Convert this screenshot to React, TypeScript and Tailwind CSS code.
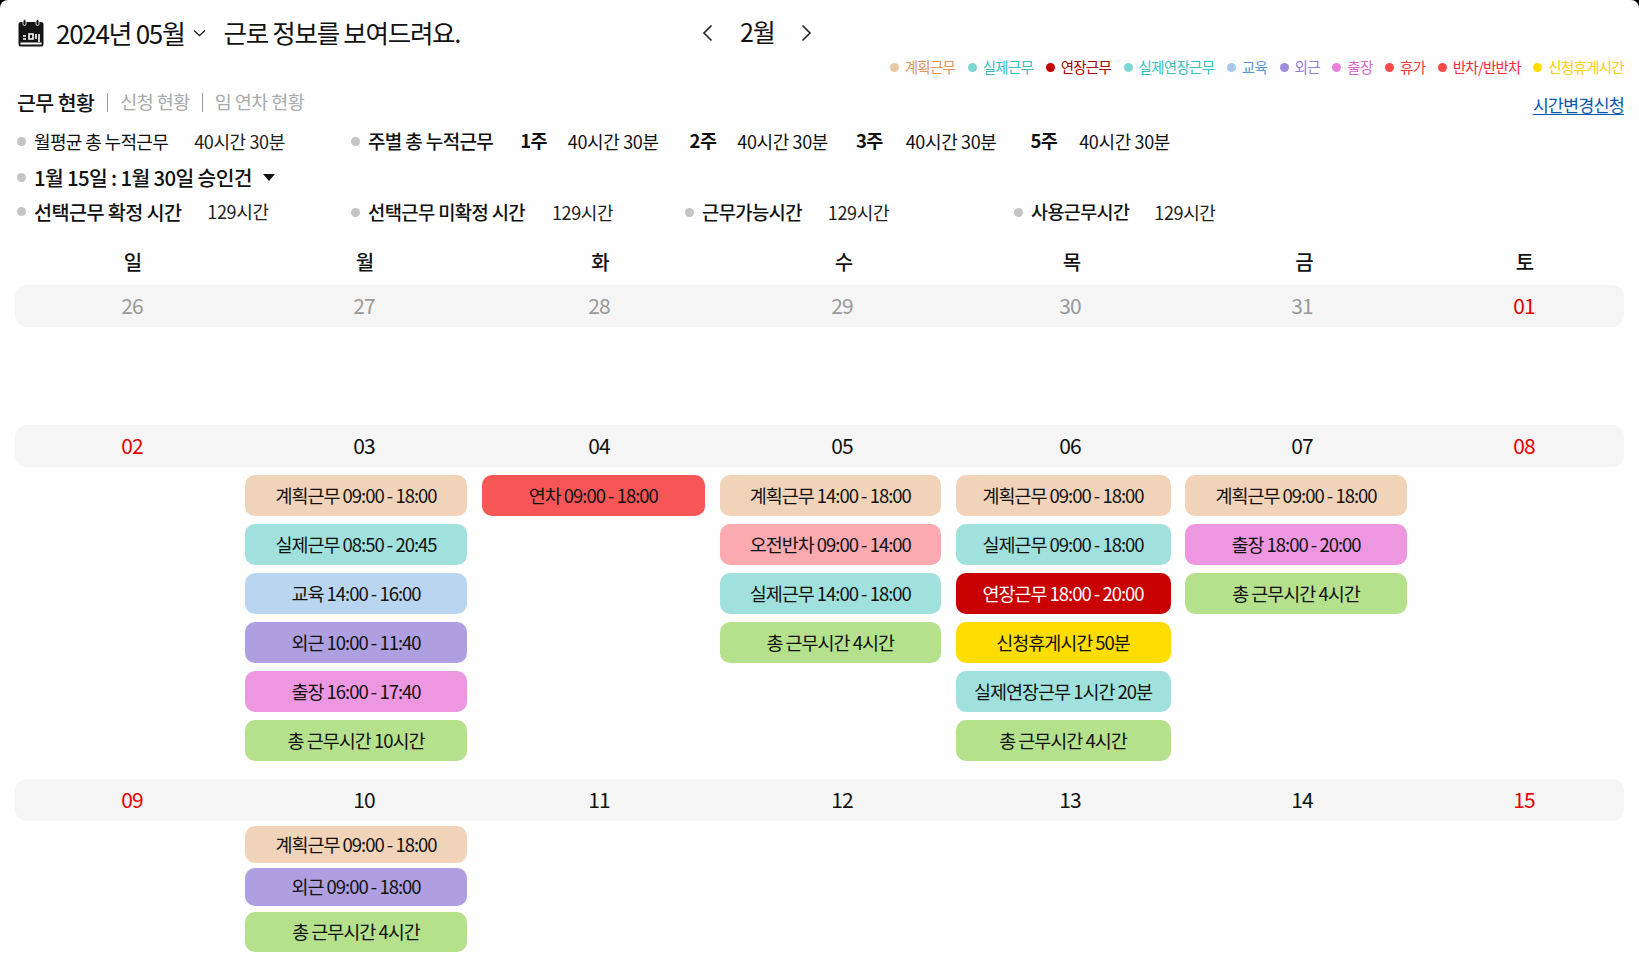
import React from "react";

const font = { fontFamily: '"Noto Sans CJK KR", "Noto Sans", sans-serif' };

const legend = [
  { label: "계획근무", dot: "bg-[#e9c8a8]", text: "text-[#e0955a]" },
  { label: "실제근무", dot: "bg-[#7cd6d4]", text: "text-[#35bfc0]" },
  { label: "연장근무", dot: "bg-[#c80000]", text: "text-[#a80000]" },
  { label: "실제연장근무", dot: "bg-[#7cd6d4]", text: "text-[#35bfc0]" },
  { label: "교육", dot: "bg-[#a9c9ea]", text: "text-[#5b94d6]" },
  { label: "외근", dot: "bg-[#9b8cdc]", text: "text-[#8f7fe0]" },
  { label: "출장", dot: "bg-[#ea80dc]", text: "text-[#d768c8]" },
  { label: "휴가", dot: "bg-[#f84a4a]", text: "text-[#f83a3a]" },
  { label: "반차/반반차", dot: "bg-[#f84a4a]", text: "text-[#fa2a3a]" },
  { label: "신청휴게시간", dot: "bg-[#ffdd00]", text: "text-[#ffcc00]" },
];

const plan = "bg-[#f0d3b8] text-[#111]";
const actual = "bg-[#a0e1de] text-[#111]";
const edu = "bg-[#b9d5f0] text-[#111]";
const out = "bg-[#ad9fe0] text-[#111]";
const trip = "bg-[#ec97e0] text-[#111]";
const total = "bg-[#b5e18d] text-[#111]";

type Chip = { text: string; color: string; size?: string };

const weeks: { dates: string[]; cols: Chip[][] }[] = [
  { dates: ["26", "27", "28", "29", "30", "31", "01"], cols: [] },
  {
    dates: ["02", "03", "04", "05", "06", "07", "08"],
    cols: [
      [],
      [
        { text: "계획근무 09:00 - 18:00", color: plan },
        { text: "실제근무 08:50 - 20:45", color: actual },
        { text: "교육 14:00 - 16:00", color: edu },
        { text: "외근 10:00 - 11:40", color: out },
        { text: "출장 16:00 - 17:40", color: trip },
        { text: "총 근무시간 10시간", color: total },
      ],
      [{ text: "연차 09:00 - 18:00", color: "bg-[#f65656] text-[#111]" }],
      [
        { text: "계획근무 14:00 - 18:00", color: plan },
        { text: "오전반차 09:00 - 14:00", color: "bg-[#fbaab0] text-[#111]" },
        { text: "실제근무 14:00 - 18:00", color: actual },
        { text: "총 근무시간 4시간", color: total },
      ],
      [
        { text: "계획근무 09:00 - 18:00", color: plan },
        { text: "실제근무 09:00 - 18:00", color: actual },
        { text: "연장근무 18:00 - 20:00", color: "bg-[#c80000] text-white" },
        { text: "신청휴게시간 50분", color: "bg-[#ffdd00] text-[#111]" },
        { text: "실제연장근무 1시간 20분", color: actual },
        { text: "총 근무시간 4시간", color: total },
      ],
      [
        { text: "계획근무 09:00 - 18:00", color: plan },
        { text: "출장 18:00 - 20:00", color: trip },
        { text: "총 근무시간 4시간", color: total },
      ],
    ],
  },
  {
    dates: ["09", "10", "11", "12", "13", "14", "15"],
    cols: [
      [],
      [
        { text: "계획근무 09:00 - 18:00", color: plan, size: "h-[37px]" },
        { text: "외근 09:00 - 18:00", color: out, size: "h-[38px]" },
        { text: "총 근무시간 4시간", color: total, size: "h-[40px] mt-px" },
      ],
    ],
  },
];

function Dot() {
  return <span className="mr-2 h-[9px] w-[9px] shrink-0 rounded-full bg-[#c4c4c4]" />;
}

function Band({ dates, muted }: { dates: string[]; muted?: boolean }) {
  return (
    <div className="grid h-[42px] grid-cols-[234px_230px_240px_246px_210px_254px_190px] items-center rounded-[12px] bg-[#f5f5f5] text-[21px] tracking-[-0.04em]">
      {dates.map((d, i) => {
        const red = i === 0 || i === 6;
        let color = "text-[#111]";
        if (muted) color = "text-[#999]";
        if (red && !(muted && i === 0)) color = "text-[#e60000]";
        return (
          <div key={d} className={`text-center ${color}`}>
            {d}
          </div>
        );
      })}
    </div>
  );
}

function Stat({ label, value, gap, labelClass }: { label: string; value: string; gap: string; labelClass: string }) {
  return (
    <div className="flex items-center">
      <Dot />
      <span className={labelClass}>{label}</span>
      <span className={`${gap} text-[18px] tracking-[-0.02em] text-[#222]`}>{value}</span>
    </div>
  );
}

function CalendarIcon() {
  return (
    <svg width="26" height="28" viewBox="0 0 26 28" className="shrink-0">
      <rect x="0.5" y="3" width="25" height="24.5" rx="2.5" fill="#151515" />
      <rect x="5" y="0.5" width="3" height="6" rx="1.5" fill="#151515" stroke="#fff" strokeWidth="0.8" />
      <rect x="18" y="0.5" width="3" height="6" rx="1.5" fill="#151515" stroke="#fff" strokeWidth="0.8" />
      <rect x="2.5" y="23.5" width="21" height="2" fill="#fff" />
      <path d="M5 17h3M5 20h3M11 15h4v5h-4zM18 15v5M21 15v8" stroke="#fff" strokeWidth="1.6" fill="none" />
    </svg>
  );
}

export default function App() {
  return (
    <div className="min-h-screen bg-black" style={font}>
      <div className="h-[960px] overflow-hidden rounded-t-[8px] bg-[#fefefe] px-[15px] pt-[16px] text-[#111]">
        {/* title */}
        <div className="flex h-8 items-center">
          <span className="ml-[3px] mt-[2px]">
            <CalendarIcon />
          </span>
          <span className="ml-[12px] text-[26px] tracking-[-0.05em]">2024년 05월</span>
          <svg width="13" height="8" viewBox="0 0 13 8" className="ml-[8px] mt-[2px]">
            <path d="M1 1.5l5.5 5 5.5-5" stroke="#222" strokeWidth="1.3" fill="none" />
          </svg>
          <span className="ml-[18px] text-[25.5px] tracking-[-0.05em]">근로 정보를 보여드려요.</span>
          <svg width="11" height="18" viewBox="0 0 11 18" className="ml-[242px] mt-[2px]">
            <path d="M9.5 1.5L2 9l7.5 7.5" stroke="#222" strokeWidth="1.6" fill="none" />
          </svg>
          <span className="ml-[27px] text-[25px] tracking-[-0.05em]">2월</span>
          <svg width="11" height="18" viewBox="0 0 11 18" className="ml-[27px] mt-[2px]">
            <path d="M1.5 1.5L9 9l-7.5 7.5" stroke="#222" strokeWidth="1.6" fill="none" />
          </svg>
        </div>

        {/* legend */}
        <div className="mt-[9px] flex h-5 items-center justify-end gap-[12.5px] text-[14.5px] tracking-[-0.05em]">
          {legend.map((l) => (
            <div key={l.label} className="flex items-center gap-[6px]">
              <span className={`h-[9px] w-[9px] rounded-full ${l.dot}`} />
              <span className={l.text}>{l.label}</span>
            </div>
          ))}
        </div>

        {/* tabs */}
        <div className="mt-[12px] flex h-[26px] items-center justify-between">
          <div className="flex items-center text-[18.5px] tracking-[-0.03em] text-[#aaa]">
            <span className="ml-[2px] text-[20.5px] font-medium text-[#111]">근무 현황</span>
            <span className="ml-[13px] h-[19px] w-px bg-[#999]" />
            <span className="ml-[12px]">신청 현황</span>
            <span className="ml-[12px] h-[19px] w-px bg-[#999]" />
            <span className="ml-[12px]">임 연차 현황</span>
          </div>
          <a className="mt-[7px] text-[17.5px] tracking-[-0.05em] text-[#0a5aad] underline underline-offset-2">시간변경신청</a>
        </div>

        {/* stats */}
        <div className="mt-[11px] tracking-[-0.04em]">
          <div className="grid h-[30px] grid-cols-[336px_1fr] items-center">
            <div className="ml-[2px]">
              <Stat label="월평균 총 누적근무" value="40시간 30분" gap="ml-[26px]" labelClass="text-[18px]" />
            </div>
            <div className="flex items-center text-[18px]">
              <Dot />
              <span className="text-[19px] font-medium">주별 총 누적근무</span>
              <span className="ml-[27px] text-[18.5px] font-bold">1주</span>
              <span className="ml-[21px] tracking-[-0.02em]">40시간 30분</span>
              <span className="ml-[31px] text-[18.5px] font-bold">2주</span>
              <span className="ml-[21px] tracking-[-0.02em]">40시간 30분</span>
              <span className="ml-[28px] text-[18.5px] font-bold">3주</span>
              <span className="ml-[23px] tracking-[-0.02em]">40시간 30분</span>
              <span className="ml-[34px] text-[18.5px] font-bold">5주</span>
              <span className="ml-[22px] tracking-[-0.02em]">40시간 30분</span>
            </div>
          </div>
          <div className="mt-[6px] ml-[2px] flex h-[30px] items-center text-[20.4px] font-medium">
            <Dot />
            <span>1월 15일 : 1월 30일 승인건</span>
            <span className="ml-[11px] h-0 w-0 border-x-[6px] border-t-[7px] border-x-transparent border-t-[#111]" />
          </div>
          <div className="mt-[5px] grid h-[30px] grid-cols-[336px_334px_329px_1fr] items-center">
            <div className="ml-[2px]">
              <Stat label="선택근무 확정 시간" value="129시간" gap="ml-[26px]" labelClass="text-[19.7px] font-medium" />
            </div>
            <Stat label="선택근무 미확정 시간" value="129시간" gap="ml-[27px]" labelClass="text-[18.8px] font-medium" />
            <Stat label="근무가능시간" value="129시간" gap="ml-[26px]" labelClass="text-[18.8px] font-medium" />
            <Stat label="사용근무시간" value="129시간" gap="ml-[25px]" labelClass="text-[18.5px] font-medium" />
          </div>
        </div>

        {/* calendar */}
        <div className="mt-[20px] ml-px grid h-[30px] grid-cols-[234px_230px_241px_246px_210px_255px_186px] items-center text-[20px] font-medium">
          {["일", "월", "화", "수", "목", "금", "토"].map((d) => (
            <div key={d} className="text-center">
              {d}
            </div>
          ))}
        </div>
        <div className="mt-2">
          {weeks.map((w, wi) => (
            <div key={wi} className={wi === 1 ? "mt-[98px]" : wi === 2 ? "mt-[18px]" : ""}>
              <Band dates={w.dates} muted={wi === 0} />
              {w.cols.length > 0 && (
                <div
                  className={`grid grid-cols-[215.5px_222px_223.5px_221.5px_215px_222px] gap-x-[14.5px] ${
                    wi === 1 ? "mt-2" : "mt-[5px]"
                  }`}
                >
                  {w.cols.map((chips, ci) => (
                    <div key={ci} className={`flex flex-col ${wi === 1 ? "gap-2" : "gap-[5px]"}`}>
                      {chips.map((c) => (
                        <div
                          key={c.text}
                          className={`flex items-center justify-center rounded-[10px] text-[18.5px] tracking-[-0.055em] ${
                            c.size ?? "h-[41px]"
                          } ${c.color}`}
                        >
                          {c.text}
                        </div>
                      ))}
                    </div>
                  ))}
                </div>
              )}
            </div>
          ))}
        </div>
      </div>
    </div>
  );
}
